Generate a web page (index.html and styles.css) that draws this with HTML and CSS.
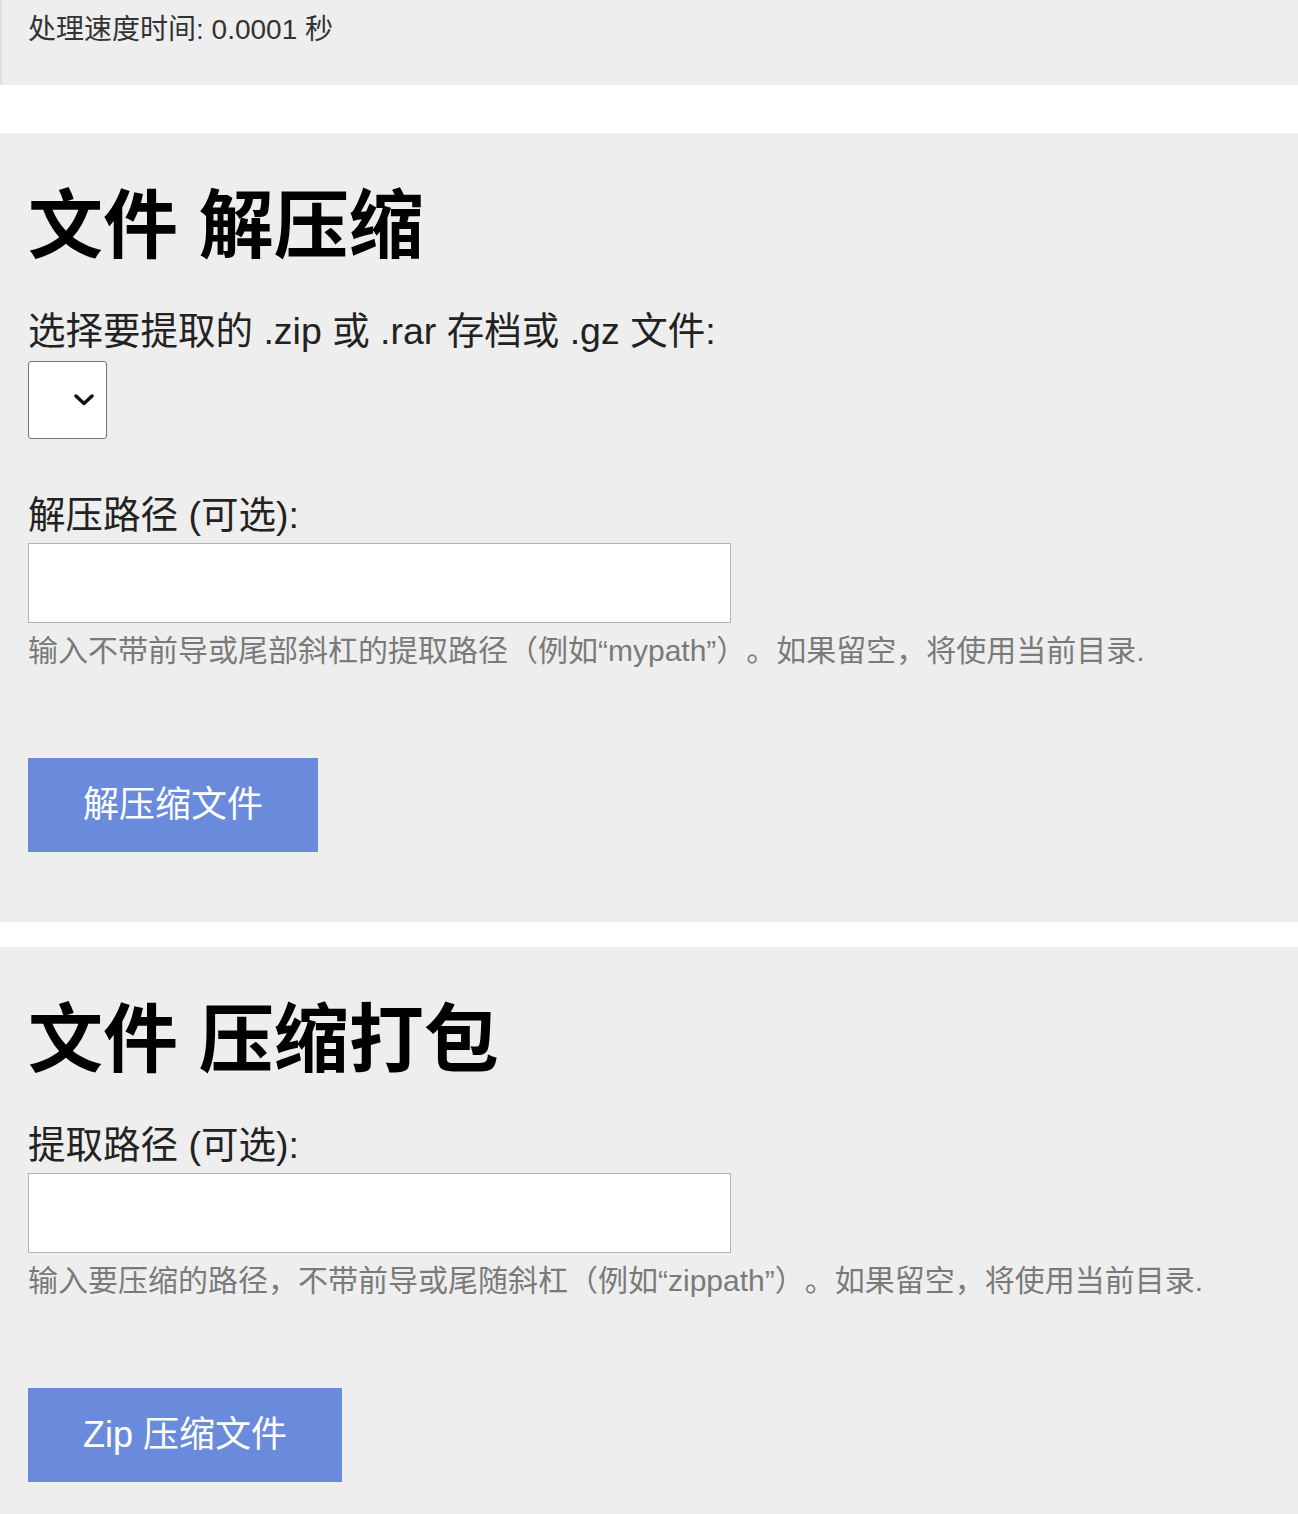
FILE: index.html
```html
<!DOCTYPE html>
<html lang="zh-CN">
<head>
<meta charset="utf-8">
<title>文件 解压缩</title>
<link rel="stylesheet" href="styles.css">
</head>
<body>
<div class="status">处理速度时间: 0.0001 秒</div>

<section class="panel panel-first">
  <h2 class="title">文件 解压缩</h2>
  <form class="form">
    <label class="label" for="archive">选择要提取的 .zip 或 .rar 存档或 .gz 文件:</label>
    <div class="select-wrap">
      <select id="archive" class="select"></select>
      <svg class="chevron" width="22" height="12" viewBox="0 0 22 12"><path d="M3 2 L11 9.5 L19 2" fill="none" stroke="#111" stroke-width="3.4" stroke-linecap="round" stroke-linejoin="round"/></svg>
    </div>
    <label class="label label-gap" for="extract">解压路径 (可选):</label>
    <input id="extract" class="input" type="text">
    <p class="help">输入不带前导或尾部斜杠的提取路径（例如“mypath”）。如果留空，将使用当前目录.</p>
    <button type="button" class="btn">解压缩文件</button>
  </form>
</section>

<section class="panel panel-second">
  <h2 class="title">文件 压缩打包</h2>
  <form class="form">
    <label class="label" for="zippath">提取路径 (可选):</label>
    <input id="zippath" class="input" type="text">
    <p class="help">输入要压缩的路径，不带前导或尾随斜杠（例如“zippath”）。如果留空，将使用当前目录.</p>
    <button type="button" class="btn">Zip 压缩文件</button>
  </form>
</section>
</body>
</html>
```

FILE: styles.css
```css
html, body {
  margin: 0;
  padding: 0;
  background: #ffffff;
}

body {
  font-family: "Liberation Sans", "Noto Sans CJK SC", sans-serif;
  color: #222;
  text-spacing-trim: space-all;
}

.status {
  box-sizing: border-box;
  height: 85px;
  padding: 10px 0 0 26px;
  background: #eeeeee;
  border-left: 2px solid #e0e0e0;
  font-size: 28px;
  line-height: 40px;
  color: #333;
  margin-bottom: 48px;
}

.panel {
  background: #eeeeee;
  padding: 48px 28px 70px;
}

.panel-first {
  margin-bottom: 25px;
}

.panel-second {
  padding-bottom: 40px;
}

.title {
  margin: 0;
  font-size: 75px;
  line-height: 90px;
  font-weight: 700;
  color: #000;
}

.form {
  display: flex;
  flex-direction: column;
  align-items: flex-start;
  margin-top: 38px;
}

.label {
  font-size: 37.5px;
  line-height: 44px;
  color: #222;
}

.label-gap {
  margin-top: 54px;
}

.select-wrap {
  position: relative;
  margin-top: 8px;
  width: 79px;
  height: 78px;
}

.select {
  -webkit-appearance: none;
  appearance: none;
  box-sizing: border-box;
  width: 79px;
  height: 78px;
  background: #ffffff;
  border: 1px solid #767676;
  border-radius: 3px;
  margin: 0;
}

.chevron {
  position: absolute;
  left: 45px;
  top: 33px;
  pointer-events: none;
}

.input {
  box-sizing: border-box;
  width: 703px;
  height: 80px;
  margin: 6px 0 0;
  background: #ffffff;
  border: 1px solid #b3b3b3;
  border-radius: 0;
  font-size: 30px;
}

.help {
  margin: 8px 0 0;
  font-size: 30px;
  line-height: 40px;
  color: #7a7a7a;
}

.btn {
  margin-top: 87px;
  height: 94px;
  padding: 0 55px;
  border: none;
  border-radius: 0;
  background: #6a8bdc;
  color: #ffffff;
  font-family: "Liberation Sans", "Noto Sans CJK SC", sans-serif;
  font-size: 36px;
  line-height: 42px;
  cursor: pointer;
}
```
